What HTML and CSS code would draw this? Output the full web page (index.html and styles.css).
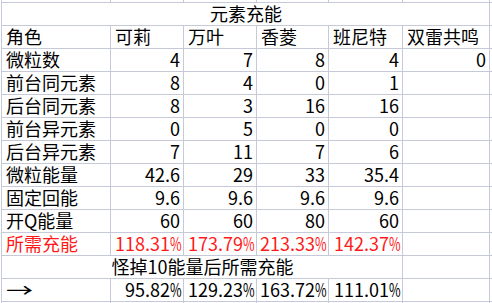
FILE: index.html
```html
<!DOCTYPE html>
<html lang="zh-CN">
<head>
<meta charset="utf-8">
<title>元素充能</title>
<link rel="stylesheet" href="styles.css">
</head>
<body>
<div class="sheet">
  <div class="c"></div><div class="c"></div><div class="c"></div><div class="c"></div><div class="c"></div><div class="c"></div><div class="c"></div>

  <div class="c center span6">元素充能</div><div class="c"></div>

  <div class="c">角色</div><div class="c">可莉</div><div class="c">万叶</div><div class="c">香菱</div><div class="c">班尼特</div><div class="c">双雷共鸣</div><div class="c"></div>

  <div class="c">微粒数</div><div class="c num">4</div><div class="c num">7</div><div class="c num">8</div><div class="c num">4</div><div class="c num">0</div><div class="c"></div>

  <div class="c">前台同元素</div><div class="c num">8</div><div class="c num">4</div><div class="c num">0</div><div class="c num">1</div><div class="c"></div><div class="c"></div>

  <div class="c">后台同元素</div><div class="c num">8</div><div class="c num">3</div><div class="c num">16</div><div class="c num">16</div><div class="c"></div><div class="c"></div>

  <div class="c">前台异元素</div><div class="c num">0</div><div class="c num">5</div><div class="c num">0</div><div class="c num">0</div><div class="c"></div><div class="c"></div>

  <div class="c">后台异元素</div><div class="c num">7</div><div class="c num">11</div><div class="c num">7</div><div class="c num">6</div><div class="c"></div><div class="c"></div>

  <div class="c">微粒能量</div><div class="c num">42.6</div><div class="c num">29</div><div class="c num">33</div><div class="c num">35.4</div><div class="c"></div><div class="c"></div>

  <div class="c">固定回能</div><div class="c num">9.6</div><div class="c num">9.6</div><div class="c num">9.6</div><div class="c num">9.6</div><div class="c"></div><div class="c"></div>

  <div class="c">开Q能量</div><div class="c num">60</div><div class="c num">60</div><div class="c num">80</div><div class="c num">60</div><div class="c"></div><div class="c"></div>

  <div class="c red">所需充能</div><div class="c num red">118.31<span class="pct">%</span></div><div class="c num red">173.79<span class="pct">%</span></div><div class="c num red">213.33<span class="pct">%</span></div><div class="c num red">142.37<span class="pct">%</span></div><div class="c"></div><div class="c"></div>

  <div class="c center span5">怪掉10能量后所需充能</div><div class="c"></div><div class="c"></div>

  <div class="c"><span class="arrow">→</span></div><div class="c num">95.82<span class="pct">%</span></div><div class="c num">129.23<span class="pct">%</span></div><div class="c num">163.72<span class="pct">%</span></div><div class="c num">111.01<span class="pct">%</span></div><div class="c"></div><div class="c"></div>

  <div class="c"></div><div class="c"></div><div class="c"></div><div class="c"></div><div class="c"></div><div class="c"></div><div class="c"></div>
</div>
</body>
</html>
```

FILE: styles.css
```css
html, body {
  margin: 0;
  padding: 0;
  background: #ffffff;
}

body {
  padding-left: 1px;
  overflow: hidden;
  font-family: "Noto Sans CJK SC", "Noto Sans", sans-serif;
  font-size: 18px;
  color: #000000;
}

.sheet {
  display: grid;
  grid-template-columns: 108px 72px 72px 71px 73px 86px 20px;
  grid-template-rows: 2px repeat(13, 22px) 10px;
  gap: 1px;
  padding-left: 1px;
  background: #c6cad8;
  width: max-content;
}

.c {
  background: #ffffff;
  display: flex;
  align-items: flex-start;
  padding: 0 3px 0 4px;
  line-height: 20px;
  white-space: nowrap;
}

.num {
  justify-content: flex-end;
}

.center {
  justify-content: center;
}

.span6 {
  grid-column: span 6;
}

.span5 {
  grid-column: span 5;
}

.red {
  color: #ff1a1a;
}

.pct {
  display: inline-block;
  width: 10px;
  transform: scaleX(0.7);
  transform-origin: left center;
}

.arrow {
  display: inline-block;
  width: 18px;
  transform: scaleX(1.5);
  transform-origin: left center;
}
```
